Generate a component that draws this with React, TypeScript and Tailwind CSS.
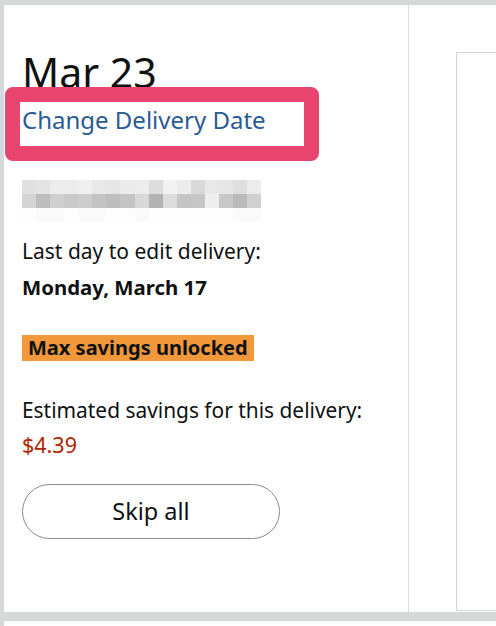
import React from "react";

const row1 = ["#e0e0e0","#e3e3e3","#ececec","#ececec","#efefef","#e8e8e8","#e6e6e6","#ebebeb","#ececec","#dcdcdc","#f1f1f1","#ececec","#d9d9d9","#e8e8e8","#e6e6e6","#dedede","#ececec"];
const row2 = ["#d4d4d4","#bdbdbd","#cfcfcf","#c9c9c9","#cdcdcd","#c3c3c3","#bebebe","#c4c4c4","#d8d8d8","#b3b3b3","#dcdcdc","#c5c5c5","#c6c6c6","#eeeeee","#c7c7c7","#bababa","#d0d0d0"];
const row3 = ["#fdfdfd","#fafafa","#fafafa","#fdfdfd","#fafafa","#fafafa","#fdfdfd","#fdfdfd","#fafafa","#fdfdfd","#fdfdfd","#fdfdfd","#fdfdfd","#fdfdfd","#fdfdfd","#fafafa","#fafafa"];

function Mosaic() {
  return (
    <div className="flex flex-col w-[239px]">
      {[row1, row2, row3].map((r, i) => (
        <div key={i} className="flex h-[14px]">
          {r.map((c, j) => (
            <div key={j} className="h-full flex-1" style={{ backgroundColor: c }} />
          ))}
        </div>
      ))}
    </div>
  );
}

export default function App() {
  return (
    <div
      className="w-[496px] h-[626px] bg-[#d5d9d9] pt-[5px] pl-[4px] overflow-hidden text-[#0f1111]"
      style={{ fontFamily: '"Noto Sans", "Liberation Sans", sans-serif' }}
    >
      <div className="relative flex h-[607px] bg-white">
        <div className="w-[405px] h-full border-r border-[#dddddd] pl-[18px] pt-[45px] flex flex-col items-start">
          <div className="text-[41px] leading-[44px] h-[44px]">Mar 23</div>
          <div className="mt-[11px] text-[24px] leading-[30px] h-[30px] text-[#2a5b94]">Change Delivery Date</div>
          <div className="mt-[45px]">
            <Mosaic />
          </div>
          <div className="mt-[16px] text-[21px] leading-[26px]">Last day to edit delivery:</div>
          <div className="mt-[10px] text-[20.4px] leading-[26px] font-bold">Monday, March 17</div>
          <div className="mt-[35px] h-[26px] bg-[#f0983a] px-[6px] text-[20px] leading-[26px] font-bold text-[#0f1111]">Max savings unlocked</div>
          <div className="mt-[36px] text-[20.9px] leading-[26px]">Estimated savings for this delivery:</div>
          <div className="mt-[9px] text-[21.5px] leading-[26px] text-[#b12704]">$4.39</div>
          <button className="mt-[26px] w-[258px] h-[55px] rounded-full border border-[#888c8c] bg-white text-[23.5px] text-[#0f1111]">Skip all</button>
        </div>
        <div className="flex-1 pt-[47px] pl-[47px] pb-[1px]">
          <div className="h-full border-l border-t border-b border-[#d5d5d5]" />
        </div>
        <div className="absolute left-[1px] top-[82px] w-[314px] h-[74px] border-[15px] border-[#e8466e] rounded-[8px]" />
      </div>
      <div className="mt-[9px] h-[10px] bg-white" />
    </div>
  );
}
